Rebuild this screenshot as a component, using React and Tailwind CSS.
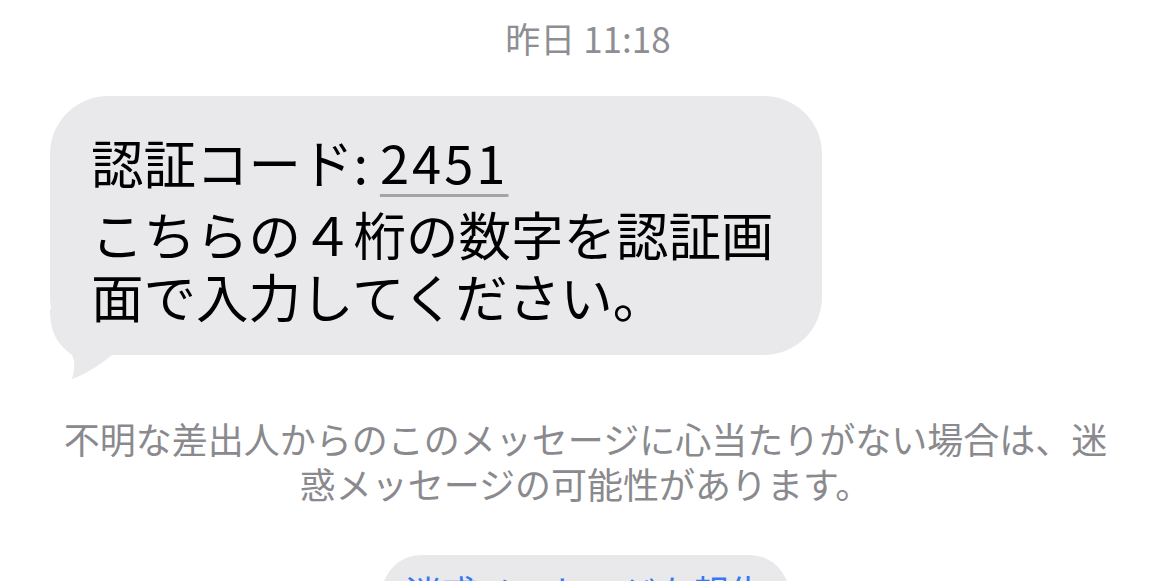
const jp = { fontFamily: '"Noto Sans CJK JP", "Noto Sans", sans-serif' };

const BubbleTail = () => (
  <svg
    className="absolute left-0 bottom-[-24px]"
    width="80"
    height="70"
    viewBox="0 0 80 70"
    fill="#e9e9eb"
  >
    <path d="M0 0 C0 22 6 34 22 46 C26 54 24 62 22 70 C34 66 50 56 62 46 L80 46 L80 0 Z" />
  </svg>
);

export default function App() {
  return (
    <div className="h-[581px] w-full overflow-hidden bg-white" style={jp}>
      <div className="flex justify-center pt-[13px] pl-[15px]">
        <span className="text-[35px] leading-[50px] text-[#8e8e93]">昨日 11:18</span>
      </div>

      <div className="pl-[50px] pt-[33px]">
        <div className="relative w-[772px]">
          <BubbleTail />
          <div className="relative rounded-[58px] bg-[#e9e9eb] pl-[41px] pt-[34px] pb-[29px] text-[52.5px] text-black">
            <div className="h-[72px] leading-[62px] whitespace-nowrap">
              認証コード:{" "}
              <span className="tracking-[3px] underline decoration-[3px] decoration-[#a3a3a8] underline-offset-[10px]">
                2451
              </span>
            </div>
            <div className="h-[62px] leading-[62px] whitespace-nowrap">こちらの４桁の数字を認証画</div>
            <div className="h-[62px] leading-[62px] whitespace-nowrap">面で入力してください。</div>
          </div>
        </div>
      </div>

      <div className="mt-[61px] pl-[10px] text-center text-[36px] leading-[45px] text-[#8a8a8e]">
        <div className="whitespace-nowrap">不明な差出人からのこのメッセージに心当たりがない場合は、迷</div>
        <div className="whitespace-nowrap">惑メッセージの可能性があります。</div>
      </div>

      <div className="mt-[49px] flex justify-center pl-[10px]">
        <div className="rounded-full bg-[#e9e9eb] px-[24px] pt-[14px] pb-[20px] text-[36px] leading-[44px] text-[#3478f6]">
          迷惑メッセージを報告
        </div>
      </div>
    </div>
  );
}
